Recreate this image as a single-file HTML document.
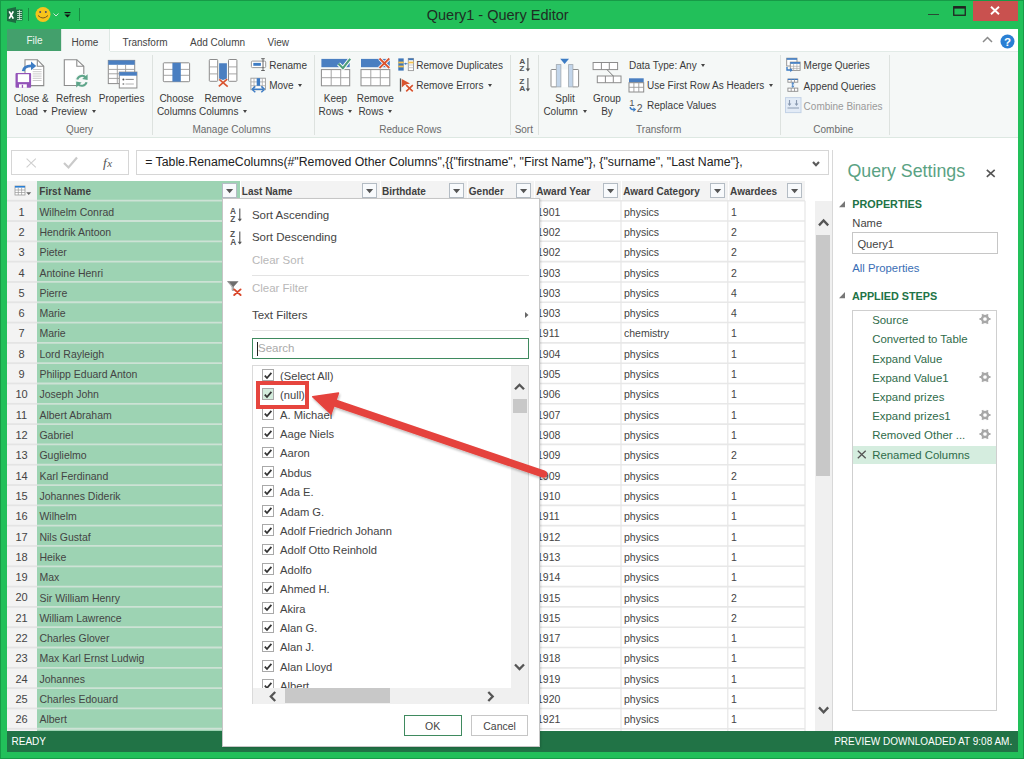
<!DOCTYPE html><html><head><meta charset="utf-8"><style>
html,body{margin:0;padding:0;}
body{width:1024px;height:759px;position:relative;overflow:hidden;background:#22c05a;font-family:"Liberation Sans", sans-serif;}
.t{position:absolute;white-space:pre;font-family:"Liberation Sans", sans-serif;}
.r{position:absolute;box-sizing:border-box;}
.dd{display:inline-block;width:0;height:0;border-left:2.5px solid transparent;border-right:2.5px solid transparent;border-top:3px solid #444;margin-left:2px;vertical-align:2px}
svg.r{overflow:visible}
</style></head><body>
<div class="r" style="left:0.00px;top:0.00px;width:1024.00px;height:1.00px;background:#179a47;"></div>
<div class="r" style="left:0.00px;top:0.00px;width:1.00px;height:759.00px;background:#179a47;"></div>
<div class="r" style="left:1023.00px;top:0.00px;width:1.00px;height:759.00px;background:#179a47;"></div>
<div class="r" style="left:0.00px;top:758.00px;width:1024.00px;height:1.00px;background:#179a47;"></div>
<svg class="r" style="left:7px;top:7px;" width="16" height="16" viewBox="0 0 16 16"><path d="M0 2 L9 0 L9 16 L0 14 Z" fill="#1d6b41"/><rect x="9" y="2.5" width="6.5" height="11" fill="#1d6b41"/><path d="M10 4.5h5M10 6.5h5M10 8.5h5M10 10.5h5M10 12.5h5M12.5 3v10" stroke="#cfe8d8" stroke-width="0.8"/><path d="M2.2 4.3 L6.3 11.7 M6.3 4.3 L2.2 11.7" stroke="#fff" stroke-width="1.7"/></svg>
<div class="r" style="left:28.00px;top:8.00px;width:1.00px;height:13.00px;background:#178c41;"></div>
<svg class="r" style="left:35px;top:7px;" width="16" height="16" viewBox="0 0 16 16"><circle cx="8" cy="7.5" r="7.5" fill="#f7c41b"/><circle cx="5.2" cy="5" r="1" fill="#4a4a6a"/><circle cx="10.8" cy="5" r="1" fill="#4a4a6a"/><path d="M3 8.5 Q8 13.5 13 8.5" stroke="#7a5a1a" stroke-width="1" fill="none"/></svg>
<svg class="r" style="left:53px;top:13px;" width="6" height="4" viewBox="0 0 6 4"><path d="M0.5 0.5 L3 3 L5.5 0.5" stroke="#cfe8d8" stroke-width="1" fill="none"/></svg>
<svg class="r" style="left:64px;top:12px;" width="7" height="6" viewBox="0 0 7 6"><rect x="0.5" y="0" width="6" height="1.2" fill="#111"/><path d="M0.5 2.5 L6.5 2.5 L3.5 5.5 Z" fill="#111"/></svg>
<div class="r" style="left:79.00px;top:8.00px;width:1.00px;height:13.00px;background:#178c41;"></div>
<div class="t" style="left:297.70px;width:400px;text-align:center;top:7.63px;font-size:14.5px;line-height:14.5px;color:#1f2d24;font-weight:400;">Query1 - Query Editor</div>
<div class="r" style="left:928.00px;top:14.00px;width:11.00px;height:1.30px;background:#2a4a35;"></div>
<svg class="r" style="left:953px;top:6px;" width="13" height="10" viewBox="0 0 13 10"><rect x="0.75" y="0.75" width="11.5" height="8.5" fill="none" stroke="#222" stroke-width="1.3"/><rect x="0.75" y="0.6" width="11.5" height="2" fill="#222"/></svg>
<div class="r" style="left:973.00px;top:1.00px;width:45.00px;height:20.00px;background:#c9514f;"></div>
<svg class="r" style="left:990px;top:6px;" width="10" height="9" viewBox="0 0 10 9"><path d="M1 0.8 L9 8.2 M9 0.8 L1 8.2" stroke="#fff" stroke-width="1.9"/></svg>
<div class="r" style="left:7.00px;top:29.00px;width:1010.50px;height:22.00px;background:#ffffff;"></div>
<div class="r" style="left:7.00px;top:29.00px;width:54.20px;height:22.00px;background:#43a06c;"></div>
<div class="t" style="left:26.50px;top:36.03px;font-size:10px;line-height:10px;color:#eef7f1;font-weight:400;">File</div>
<div class="r" style="left:61.20px;top:29.00px;width:48.50px;height:23.00px;background:#f5f8f7;border-left:1px solid #dde8e3;border-right:1px solid #dde8e3;"></div>
<div class="t" style="left:71.60px;top:37.53px;font-size:10px;line-height:10px;color:#444;font-weight:400;">Home</div>
<div class="t" style="left:122.40px;top:37.53px;font-size:10px;line-height:10px;color:#444;font-weight:400;">Transform</div>
<div class="t" style="left:190.00px;top:37.53px;font-size:10px;line-height:10px;color:#444;font-weight:400;">Add Column</div>
<div class="t" style="left:267.50px;top:37.53px;font-size:10px;line-height:10px;color:#444;font-weight:400;">View</div>
<svg class="r" style="left:982px;top:36px;" width="11" height="7" viewBox="0 0 11 7"><path d="M1 6 L5.5 1.5 L10 6" stroke="#8a8a8a" stroke-width="1.5" fill="none"/></svg>
<svg class="r" style="left:999.5px;top:33.5px;" width="15" height="15" viewBox="0 0 15 15"><circle cx="7.5" cy="7.5" r="7" fill="#2a7fd4"/><text x="7.5" y="11.6" font-family="Liberation Sans" font-weight="700" font-size="11.5" fill="#fff" text-anchor="middle">?</text></svg>
<div class="r" style="left:7.00px;top:51.00px;width:1010.50px;height:86.50px;background:#f5f8f7;"></div>
<div class="r" style="left:7.00px;top:136.80px;width:1010.50px;height:1.20px;background:#dde8e2;"></div>
<div class="r" style="left:109.50px;top:51.00px;width:908.00px;height:1.00px;background:#e2ebe7;"></div>
<div class="r" style="left:152.20px;top:55.00px;width:1.00px;height:80.00px;background:#dde2df;"></div>
<div class="r" style="left:313.60px;top:55.00px;width:1.00px;height:80.00px;background:#dde2df;"></div>
<div class="r" style="left:510.00px;top:55.00px;width:1.00px;height:80.00px;background:#dde2df;"></div>
<div class="r" style="left:538.40px;top:55.00px;width:1.00px;height:80.00px;background:#dde2df;"></div>
<div class="r" style="left:779.80px;top:55.00px;width:1.00px;height:80.00px;background:#dde2df;"></div>
<div class="r" style="left:889.30px;top:55.00px;width:1.00px;height:80.00px;background:#dde2df;"></div>
<svg class="r" style="left:14px;top:58px;" width="32" height="32" viewBox="0 0 32 32"><path d="M11 1.7 H23.3 L29.75 8.3 V27.6 H11 Z" fill="#fff" stroke="#8c8c8c" stroke-width="1.1"/><path d="M23.3 1.7 V8.3 H29.75" fill="none" stroke="#8c8c8c" stroke-width="1.1"/><path d="M18.7 11.5 H27.6" stroke="#c4c4c4" stroke-width="0.9"/><path d="M18.7 13.7 H27.6" stroke="#c4c4c4" stroke-width="0.9"/><path d="M18.7 15.9 H27.6" stroke="#c4c4c4" stroke-width="0.9"/><path d="M18.7 18.1 H27.6" stroke="#c4c4c4" stroke-width="0.9"/><path d="M18.7 20.3 H27.6" stroke="#c4c4c4" stroke-width="0.9"/><path d="M18.7 22.5 H27.6" stroke="#c4c4c4" stroke-width="0.9"/><path d="M9.3 13.2 Q9.8 7.6 18 7.9" fill="none" stroke="#3d7cc4" stroke-width="2.9"/><path d="M17 3.6 L22.2 8 L17 12.2 Z" fill="#3d7cc4"/><rect x="1.5" y="15" width="15.6" height="14.8" rx="1" fill="#9353b9"/><rect x="3.8" y="16.2" width="11.3" height="7.9" fill="#fff"/><rect x="5" y="26.3" width="7.8" height="3.5" fill="#fff"/><rect x="7.8" y="26.8" width="1.3" height="3" fill="#9353b9"/></svg>
<svg class="r" style="left:62px;top:58px;" width="30" height="30" viewBox="0 0 30 30"><path d="M2.3 1.7 H14.8 L21.8 8.3 V27.5 H2.3 Z" fill="#fff" stroke="#8c8c8c" stroke-width="1.1"/><path d="M14.8 1.7 V8.3 H21.8" fill="none" stroke="#8c8c8c" stroke-width="1.1"/><circle cx="19.9" cy="22.8" r="7" fill="#f5f8f7"/><path d="M15.2 21.5 A5 5 0 0 1 24 19.8" fill="none" stroke="#5ea58a" stroke-width="2.1"/><path d="M25.6 16.2 L25.6 22 L20.2 21 Z" fill="#5ea58a"/><path d="M24.6 24.2 A5 5 0 0 1 15.8 25.8" fill="none" stroke="#5ea58a" stroke-width="2.1"/><path d="M14.2 29.4 L14.2 23.6 L19.6 24.6 Z" fill="#5ea58a"/></svg>
<svg class="r" style="left:107px;top:59px;" width="32" height="31" viewBox="0 0 32 31"><rect x="1.3" y="1.4" width="26.4" height="23.2" fill="#fff" stroke="#8c8c8c" stroke-width="1"/><rect x="1.3" y="1.4" width="26.4" height="4.4" fill="#4a7fc1"/><path d="M10.3 5.8 V24.6 M18.6 5.8 V13 M1.3 10.4 H27.7 M1.3 14.8 H12 M1.3 19.4 H12" stroke="#9c9c9c" stroke-width="0.9"/><rect x="12.3" y="13.1" width="17.6" height="15.9" fill="#fff" stroke="#8c8c8c" stroke-width="1"/><rect x="12.3" y="13.1" width="17.6" height="3.6" fill="#4a7fc1"/><circle cx="16.4" cy="20.4" r="1" fill="#555"/><path d="M18.5 20.4 H26.8" stroke="#777" stroke-width="0.9"/><circle cx="16.4" cy="25" r="1" fill="#999"/><path d="M18.5 25 H26.8" stroke="#aaa" stroke-width="0.9"/></svg>
<svg class="r" style="left:162px;top:61px;" width="30" height="23" viewBox="0 0 30 23"><rect x="1.3" y="1.8" width="26.3" height="18.9" rx="0.8" fill="#fff" stroke="#8c8c8c" stroke-width="1"/><path d="M1.3 8.4 H27.6 M1.3 14.3 H27.6" stroke="#9c9c9c" stroke-width="0.9"/><rect x="10.4" y="1.8" width="8.4" height="18.9" fill="#4a7fc1"/></svg>
<svg class="r" style="left:208px;top:58px;" width="31" height="31" viewBox="0 0 31 31"><rect x="1.3" y="1.5" width="8.4" height="21.8" rx="0.8" fill="#fff" stroke="#8c8c8c" stroke-width="1"/><path d="M1.3 8.9 H9.7 M1.3 15.9 H9.7" stroke="#9c9c9c" stroke-width="0.9"/><rect x="20.5" y="1.5" width="8.4" height="21.8" rx="0.8" fill="#fff" stroke="#8c8c8c" stroke-width="1"/><path d="M20.5 8.9 H28.9 M20.5 15.9 H28.9" stroke="#9c9c9c" stroke-width="0.9"/><path d="M11.1 5.2 H18.9 V20.5 L15 22 L11.1 20.5 Z" fill="#4a7fc1"/><path d="M10.8 28.4 L19.2 21.1 M11.3 21.3 L19.7 28.6" stroke="#d9542f" stroke-width="1.6"/></svg>
<svg class="r" style="left:250px;top:58px;" width="17" height="14" viewBox="0 0 17 14"><rect x="1.4" y="3.1" width="14.3" height="6.5" rx="1" fill="#fff" stroke="#999" stroke-width="1"/><rect x="3.3" y="4.9" width="7.6" height="2.9" fill="#3d7cc4"/><path d="M13 0.7 V12.5 M11.2 0.7 H14.8 M11.2 12.5 H14.8" stroke="#555" stroke-width="0.9"/></svg>
<svg class="r" style="left:250px;top:77px;" width="17" height="16" viewBox="0 0 17 16"><rect x="0.9" y="1.2" width="14.5" height="11.5" fill="#fff" stroke="#999" stroke-width="0.9"/><path d="M4 1.2 V12.7 M12.3 1.2 V12.7 M0.9 4.9 H15.4 M0.9 8.7 H15.4" stroke="#aaa" stroke-width="0.8"/><rect x="6.7" y="1.2" width="3.4" height="7.6" fill="#3d7cc4"/><path d="M3 12.3 H13.6" stroke="#3d7cc4" stroke-width="1.6"/><path d="M2 12.3 L5.3 9.4 M2 12.3 L5.3 15.2 M14.6 12.3 L11.3 9.4 M14.6 12.3 L11.3 15.2" stroke="#3d7cc4" stroke-width="1.5"/></svg>
<svg class="r" style="left:320px;top:57px;" width="32" height="30" viewBox="0 0 32 30"><rect x="1.4" y="1.9" width="28.3" height="8.3" fill="#4a7fc1"/><rect x="1.4" y="12.6" width="28.3" height="16.2" fill="#fff" stroke="#8c8c8c" stroke-width="1"/><path d="M11.2 12.6 V28.8 M20.7 12.6 V28.8 M1.4 20.7 H29.7" stroke="#9c9c9c" stroke-width="0.9"/><path d="M18.5 6.8 L22.9 11.2 L30.2 1.9" fill="none" stroke="#fff" stroke-width="4"/><path d="M18.5 6.8 L22.9 11.2 L30.2 1.9" fill="none" stroke="#4e9e7a" stroke-width="2.1"/></svg>
<svg class="r" style="left:360px;top:57px;" width="32" height="30" viewBox="0 0 32 30"><rect x="1" y="1.9" width="28.8" height="8.3" fill="#4a7fc1"/><rect x="1" y="12.6" width="28.8" height="16.2" fill="#fff" stroke="#8c8c8c" stroke-width="1"/><path d="M10.8 12.6 V28.8 M20.3 12.6 V28.8 M1 20.7 H29.8" stroke="#9c9c9c" stroke-width="0.9"/><path d="M19.5 1.5 L29.3 11 M29.3 1.5 L19.5 11" stroke="#fff" stroke-width="3.5"/><path d="M19.5 1.5 L29.3 11 M29.3 1.5 L19.5 11" stroke="#d9542f" stroke-width="1.8"/></svg>
<svg class="r" style="left:397px;top:57px;" width="18" height="15" viewBox="0 0 18 15"><rect x="1.3" y="1.4" width="5.4" height="12.2" fill="#3f77b9"/><rect x="1.3" y="4.6" width="5.4" height="1.8" fill="#f2c14e"/><rect x="1.3" y="8.6" width="5.4" height="1.8" fill="#f2c14e"/><rect x="11.3" y="1.4" width="5.2" height="12.2" fill="#fff" stroke="#999" stroke-width="0.9"/><rect x="11.3" y="1.4" width="5.2" height="1.8" fill="#3f77b9"/><rect x="11.3" y="4.6" width="5.2" height="1.8" fill="#f2c14e"/><path d="M11.3 8 H16.5 M11.3 10.7 H16.5" stroke="#bbb" stroke-width="0.8"/><path d="M7.5 6.7 H10.5" stroke="#3f77b9" stroke-width="0.9"/><path d="M7.3 6.7 L8.8 5.5 V7.9 Z" fill="#3f77b9"/></svg>
<svg class="r" style="left:398px;top:77px;" width="17" height="16" viewBox="0 0 17 16"><path d="M2.5 1.4 V14.6" stroke="#555" stroke-width="1.3"/><path d="M3.8 2 L12 6.5 L6.5 8 L3.8 10.5 Z" fill="#d9542f"/><path d="M8.2 8.2 L14.8 14.4 M14.8 8.2 L8.2 14.4" stroke="#fff" stroke-width="3"/><path d="M8.2 8.2 L14.8 14.4 M14.8 8.2 L8.2 14.4" stroke="#d9542f" stroke-width="1.7"/></svg>
<svg class="r" style="left:518px;top:57px;" width="14" height="16" viewBox="0 0 14 16"><text x="1.2" y="7.9" font-family="Liberation Sans" font-size="8.4" font-weight="700" fill="#555" transform="scale(1,0.86)">A</text><text x="1.2" y="16.5" font-family="Liberation Sans" font-size="8.4" font-weight="700" fill="#555" transform="scale(1,0.86)">Z</text><path d="M9.9 1 V13" stroke="#555" stroke-width="1.1"/><path d="M7.7 11.4 H12.1 L9.9 14.4 Z" fill="#555"/></svg>
<svg class="r" style="left:518px;top:77px;" width="14" height="16" viewBox="0 0 14 16"><text x="1.2" y="7.9" font-family="Liberation Sans" font-size="8.4" font-weight="700" fill="#555" transform="scale(1,0.86)">Z</text><text x="1.2" y="16.5" font-family="Liberation Sans" font-size="8.4" font-weight="700" fill="#555" transform="scale(1,0.86)">A</text><path d="M9.9 1 V13" stroke="#555" stroke-width="1.1"/><path d="M7.7 11.4 H12.1 L9.9 14.4 Z" fill="#555"/></svg>
<svg class="r" style="left:548px;top:56px;" width="34" height="34" viewBox="0 0 34 34"><rect x="8.3" y="13.5" width="12.3" height="17.4" fill="#fff"/><path d="M8.3 13.5 H3.7 Q3 13.5 3 14.2 V30.2 Q3 30.9 3.7 30.9 H8.3" fill="#fff" stroke="#8c8c8c" stroke-width="1"/><path d="M24.9 13.5 H29.9 Q30.6 13.5 30.6 14.2 V30.2 Q30.6 30.9 29.9 30.9 H24.9" fill="#fff" stroke="#8c8c8c" stroke-width="1"/><rect x="8.3" y="8.6" width="4.6" height="22.3" fill="#c2d5ea" stroke="#a0a8b0" stroke-width="0.8"/><rect x="20.6" y="8.6" width="4.3" height="22.3" fill="#c2d5ea" stroke="#a0a8b0" stroke-width="0.8"/><path d="M12.2 2.8 H21 L16.6 7.9 Z" fill="#3d7cc4"/></svg>
<svg class="r" style="left:592px;top:61px;" width="31" height="23" viewBox="0 0 31 23"><rect x="1.1" y="1.5" width="24.5" height="7.1" fill="#fff" stroke="#8c8c8c" stroke-width="1"/><path d="M9.4 1.5 V8.6 M17.3 1.5 V8.6" stroke="#8c8c8c" stroke-width="1"/><rect x="5.3" y="15" width="23.7" height="6.7" fill="#fff" stroke="#8c8c8c" stroke-width="1"/><path d="M13.4 15 V21.7 M21.3 15 V21.7" stroke="#8c8c8c" stroke-width="1"/><path d="M15 8.6 L21.3 15" stroke="#777" stroke-width="1"/></svg>
<svg class="r" style="left:628px;top:77px;" width="17" height="16" viewBox="0 0 17 16"><rect x="1" y="1.3" width="14.7" height="4.4" fill="#4a7fc1"/><rect x="1" y="5.7" width="14.7" height="9.3" fill="#fff" stroke="#8c8c8c" stroke-width="1"/><path d="M5.9 5.7 V15 M10.8 5.7 V15 M1 10.3 H15.7" stroke="#9c9c9c" stroke-width="0.9"/></svg>
<svg class="r" style="left:628px;top:97px;" width="17" height="17" viewBox="0 0 17 17"><text x="1.2" y="8.8" font-family="Liberation Sans" font-size="9.6" fill="#555">1</text><text x="8.8" y="14.9" font-family="Liberation Sans" font-size="10.5" fill="#555">2</text><path d="M2.2 10 Q2.2 12.6 6 12.6" fill="none" stroke="#3d7cc4" stroke-width="1.5"/><path d="M5.4 10.2 L8.2 12.6 L5.4 15 Z" fill="#3d7cc4"/></svg>
<svg class="r" style="left:785px;top:57px;" width="17" height="17" viewBox="0 0 17 17"><rect x="1.7" y="1.2" width="10.3" height="7.8" fill="#fff" stroke="#8c8c8c" stroke-width="0.9"/><rect x="1.7" y="1.2" width="10.3" height="1.6" fill="#3d7cc4"/><rect x="5.3" y="5.1" width="9.8" height="8.3" fill="#fff" stroke="#8c8c8c" stroke-width="0.9"/><rect x="5.3" y="5.1" width="9.8" height="1.7" fill="#3d7cc4"/><path d="M5.3 9.3 H15.1 M5.3 11.4 H15.1 M8.6 6.8 V13.4 M11.9 6.8 V13.4" stroke="#aaa" stroke-width="0.7"/><path d="M2 10 V13 H6" fill="none" stroke="#3d7cc4" stroke-width="1.4"/><path d="M5.3 10.8 L7.6 13 L5.3 15.2 Z" fill="#3d7cc4"/></svg>
<svg class="r" style="left:786px;top:77px;" width="14" height="16" viewBox="0 0 14 16"><rect x="1.9" y="2.1" width="9.9" height="3.1" fill="#fff" stroke="#8c8c8c" stroke-width="0.9"/><rect x="1.9" y="1.8" width="9.9" height="1.2" fill="#3d7cc4"/><path d="M5.2 2.1 V5.2 M8.5 2.1 V5.2" stroke="#8c8c8c" stroke-width="0.8"/><path d="M6.8 6 V10" stroke="#3d7cc4" stroke-width="1.1"/><path d="M5.5 6.8 L6.8 5.6 L8.1 6.8 M5.5 9.2 L6.8 10.4 L8.1 9.2" fill="none" stroke="#3d7cc4" stroke-width="0.9"/><rect x="1.9" y="11.1" width="9.9" height="3.2" fill="#fff" stroke="#8c8c8c" stroke-width="0.9"/><path d="M5.2 11.1 V14.3 M8.5 11.1 V14.3" stroke="#8c8c8c" stroke-width="0.8"/></svg>
<svg class="r" style="left:785px;top:97px;" width="17" height="17" viewBox="0 0 17 17"><rect x="0.5" y="0.6" width="15.5" height="15" fill="#e2ebf6" stroke="#c3d2e6" stroke-width="1"/><path d="M4.5 3 V8 M11.5 3 V8" stroke="#8a9ab0" stroke-width="1.1"/><path d="M2.6 6.5 H6.4 L4.5 9 Z M9.6 6.5 H13.4 L11.5 9 Z" fill="#8a9ab0"/><path d="M2.5 11 H14" stroke="#8a9ab0" stroke-width="1"/></svg>
<div class="t" style="left:-120.50px;width:400px;text-align:center;top:125.23px;font-size:10px;line-height:10px;color:#6b6b6b;font-weight:400;">Query</div>
<div class="t" style="left:31.60px;width:400px;text-align:center;top:125.23px;font-size:10px;line-height:10px;color:#6b6b6b;font-weight:400;">Manage Columns</div>
<div class="t" style="left:210.40px;width:400px;text-align:center;top:125.23px;font-size:10px;line-height:10px;color:#6b6b6b;font-weight:400;">Reduce Rows</div>
<div class="t" style="left:323.80px;width:400px;text-align:center;top:125.23px;font-size:10px;line-height:10px;color:#6b6b6b;font-weight:400;">Sort</div>
<div class="t" style="left:458.70px;width:400px;text-align:center;top:125.23px;font-size:10px;line-height:10px;color:#6b6b6b;font-weight:400;">Transform</div>
<div class="t" style="left:633.30px;width:400px;text-align:center;top:125.23px;font-size:10px;line-height:10px;color:#6b6b6b;font-weight:400;">Combine</div>
<div class="t" style="left:-168.80px;width:400px;text-align:center;top:94.03px;font-size:10px;line-height:10px;color:#3a3a3a;font-weight:400;">Close &amp;</div>
<div class="t" style="left:-168.80px;width:400px;text-align:center;top:106.83px;font-size:10px;line-height:10px;color:#3a3a3a;font-weight:400;">Load <span class="dd"></span></div>
<div class="t" style="left:-126.50px;width:400px;text-align:center;top:94.03px;font-size:10px;line-height:10px;color:#3a3a3a;font-weight:400;">Refresh</div>
<div class="t" style="left:-126.50px;width:400px;text-align:center;top:106.83px;font-size:10px;line-height:10px;color:#3a3a3a;font-weight:400;">Preview <span class="dd"></span></div>
<div class="t" style="left:-78.40px;width:400px;text-align:center;top:94.03px;font-size:10px;line-height:10px;color:#3a3a3a;font-weight:400;">Properties</div>
<div class="t" style="left:-23.40px;width:400px;text-align:center;top:94.03px;font-size:10px;line-height:10px;color:#3a3a3a;font-weight:400;">Choose</div>
<div class="t" style="left:-23.40px;width:400px;text-align:center;top:106.83px;font-size:10px;line-height:10px;color:#3a3a3a;font-weight:400;">Columns</div>
<div class="t" style="left:23.10px;width:400px;text-align:center;top:94.03px;font-size:10px;line-height:10px;color:#3a3a3a;font-weight:400;">Remove</div>
<div class="t" style="left:23.10px;width:400px;text-align:center;top:106.83px;font-size:10px;line-height:10px;color:#3a3a3a;font-weight:400;">Columns <span class="dd"></span></div>
<div class="t" style="left:135.50px;width:400px;text-align:center;top:94.03px;font-size:10px;line-height:10px;color:#3a3a3a;font-weight:400;">Keep</div>
<div class="t" style="left:135.50px;width:400px;text-align:center;top:106.83px;font-size:10px;line-height:10px;color:#3a3a3a;font-weight:400;">Rows <span class="dd"></span></div>
<div class="t" style="left:175.30px;width:400px;text-align:center;top:94.03px;font-size:10px;line-height:10px;color:#3a3a3a;font-weight:400;">Remove</div>
<div class="t" style="left:175.30px;width:400px;text-align:center;top:106.83px;font-size:10px;line-height:10px;color:#3a3a3a;font-weight:400;">Rows <span class="dd"></span></div>
<div class="t" style="left:365.00px;width:400px;text-align:center;top:94.03px;font-size:10px;line-height:10px;color:#3a3a3a;font-weight:400;">Split</div>
<div class="t" style="left:365.00px;width:400px;text-align:center;top:106.83px;font-size:10px;line-height:10px;color:#3a3a3a;font-weight:400;">Column <span class="dd"></span></div>
<div class="t" style="left:407.00px;width:400px;text-align:center;top:94.03px;font-size:10px;line-height:10px;color:#3a3a3a;font-weight:400;">Group</div>
<div class="t" style="left:407.00px;width:400px;text-align:center;top:106.83px;font-size:10px;line-height:10px;color:#3a3a3a;font-weight:400;">By</div>
<div class="t" style="left:269.20px;top:61.03px;font-size:10px;line-height:10px;color:#3a3a3a;font-weight:400;">Rename</div>
<div class="t" style="left:269.20px;top:81.03px;font-size:10px;line-height:10px;color:#3a3a3a;font-weight:400;">Move <span class="dd"></span></div>
<div class="t" style="left:416.20px;top:61.03px;font-size:10px;line-height:10px;color:#3a3a3a;font-weight:400;">Remove Duplicates</div>
<div class="t" style="left:416.20px;top:81.03px;font-size:10px;line-height:10px;color:#3a3a3a;font-weight:400;">Remove Errors <span class="dd"></span></div>
<div class="t" style="left:629.00px;top:60.94px;font-size:10px;line-height:10px;color:#3a3a3a;font-weight:400;">Data Type: Any <span class="dd"></span></div>
<div class="t" style="left:647.00px;top:81.23px;font-size:10px;line-height:10px;color:#3a3a3a;font-weight:400;">Use First Row As Headers <span class="dd"></span></div>
<div class="t" style="left:647.00px;top:101.33px;font-size:10px;line-height:10px;color:#3a3a3a;font-weight:400;">Replace Values</div>
<div class="t" style="left:803.60px;top:61.33px;font-size:10px;line-height:10px;color:#3a3a3a;font-weight:400;">Merge Queries</div>
<div class="t" style="left:803.60px;top:81.53px;font-size:10px;line-height:10px;color:#3a3a3a;font-weight:400;">Append Queries</div>
<div class="t" style="left:803.60px;top:101.53px;font-size:10px;line-height:10px;color:#9a9a9a;font-weight:400;">Combine Binaries</div>
<div class="r" style="left:7.00px;top:138.00px;width:1010.50px;height:593.00px;background:#ffffff;"></div>
<div class="r" style="left:11.00px;top:150.00px;width:117.50px;height:24.80px;background:#fff;border:1px solid #d6d6d6;"></div>
<svg class="r" style="left:26px;top:157.5px;" width="11" height="10" viewBox="0 0 11 10"><path d="M0.6 0.6 L9.8 9.4 M9.8 0.6 L0.6 9.4" stroke="#cfcfcf" stroke-width="1.1"/></svg>
<svg class="r" style="left:63px;top:156px;" width="15" height="13" viewBox="0 0 15 13"><path d="M1 7 L5.5 11.5 L14 1.5" stroke="#cacaca" stroke-width="2.2" fill="none"/></svg>
<svg class="r" style="left:102px;top:155px;" width="14" height="14" viewBox="0 0 14 14"><text x="1" y="11.5" font-family="Liberation Serif" font-style="italic" font-size="13.5" fill="#555">f</text><text x="5.2" y="11.5" font-family="Liberation Serif" font-style="italic" font-size="11" fill="#555">x</text></svg>
<div class="r" style="left:135.50px;top:150.00px;width:693.00px;height:24.80px;background:#fff;border:1px solid #d6d6d6;"></div>
<div class="t" style="left:145.20px;top:156.09px;font-size:12.3px;line-height:12.3px;color:#222;font-weight:400;">= Table.RenameColumns(#"Removed Other Columns",{{"firstname", "First Name"}, {"surname", "Last Name"},</div>
<svg class="r" style="left:811.5px;top:160.8px;" width="8" height="6" viewBox="0 0 8 6"><path d="M1 1 L4 4.3 L7 1" stroke="#5a5a5a" stroke-width="2.1" fill="none"/></svg>
<div class="r" style="left:7.00px;top:180.80px;width:798.00px;height:20.00px;background:#f3f3f3;"></div>
<div class="r" style="left:37.00px;top:180.80px;width:202.50px;height:20.00px;background:#9dd3b3;"></div>
<div class="r" style="left:239.50px;top:180.80px;width:1.00px;height:20.00px;background:#ffffff;"></div>
<div class="r" style="left:379.70px;top:180.80px;width:1.00px;height:20.00px;background:#ffffff;"></div>
<div class="r" style="left:466.50px;top:180.80px;width:1.00px;height:20.00px;background:#ffffff;"></div>
<div class="r" style="left:534.00px;top:180.80px;width:1.00px;height:20.00px;background:#ffffff;"></div>
<div class="r" style="left:621.00px;top:180.80px;width:1.00px;height:20.00px;background:#ffffff;"></div>
<div class="r" style="left:727.80px;top:180.80px;width:1.00px;height:20.00px;background:#ffffff;"></div>
<div class="r" style="left:805.00px;top:180.80px;width:1.00px;height:20.00px;background:#ffffff;"></div>
<div class="t" style="left:39.30px;top:186.84px;font-size:10px;line-height:10px;color:#404040;font-weight:700;">First Name</div>
<div class="r" style="left:221.50px;top:183.10px;width:15.30px;height:14.90px;background:#f8fafc;border:1px solid #b4bcc4;"></div>
<svg class="r" style="left:225.6px;top:188.6px;" width="7.4" height="4.5" viewBox="0 0 7.4 4.5"><path d="M0 0 L7.2 0 L3.6 4.2 Z" fill="#555"/></svg>
<div class="t" style="left:241.80px;top:186.84px;font-size:10px;line-height:10px;color:#404040;font-weight:700;">Last Name</div>
<div class="r" style="left:361.70px;top:183.10px;width:15.30px;height:14.90px;background:#f8fafc;border:1px solid #b4bcc4;"></div>
<svg class="r" style="left:365.8px;top:188.6px;" width="7.4" height="4.5" viewBox="0 0 7.4 4.5"><path d="M0 0 L7.2 0 L3.6 4.2 Z" fill="#555"/></svg>
<div class="t" style="left:382.00px;top:186.84px;font-size:10px;line-height:10px;color:#404040;font-weight:700;">Birthdate</div>
<div class="r" style="left:448.50px;top:183.10px;width:15.30px;height:14.90px;background:#f8fafc;border:1px solid #b4bcc4;"></div>
<svg class="r" style="left:452.6px;top:188.6px;" width="7.4" height="4.5" viewBox="0 0 7.4 4.5"><path d="M0 0 L7.2 0 L3.6 4.2 Z" fill="#555"/></svg>
<div class="t" style="left:468.80px;top:186.84px;font-size:10px;line-height:10px;color:#404040;font-weight:700;">Gender</div>
<div class="r" style="left:516.00px;top:183.10px;width:15.30px;height:14.90px;background:#f8fafc;border:1px solid #b4bcc4;"></div>
<svg class="r" style="left:520.1px;top:188.6px;" width="7.4" height="4.5" viewBox="0 0 7.4 4.5"><path d="M0 0 L7.2 0 L3.6 4.2 Z" fill="#555"/></svg>
<div class="t" style="left:536.30px;top:186.84px;font-size:10px;line-height:10px;color:#404040;font-weight:700;">Award Year</div>
<div class="r" style="left:603.00px;top:183.10px;width:15.30px;height:14.90px;background:#f8fafc;border:1px solid #b4bcc4;"></div>
<svg class="r" style="left:607.1px;top:188.6px;" width="7.4" height="4.5" viewBox="0 0 7.4 4.5"><path d="M0 0 L7.2 0 L3.6 4.2 Z" fill="#555"/></svg>
<div class="t" style="left:623.30px;top:186.84px;font-size:10px;line-height:10px;color:#404040;font-weight:700;">Award Category</div>
<div class="r" style="left:709.80px;top:183.10px;width:15.30px;height:14.90px;background:#f8fafc;border:1px solid #b4bcc4;"></div>
<svg class="r" style="left:713.9px;top:188.6px;" width="7.4" height="4.5" viewBox="0 0 7.4 4.5"><path d="M0 0 L7.2 0 L3.6 4.2 Z" fill="#555"/></svg>
<div class="t" style="left:730.10px;top:186.84px;font-size:10px;line-height:10px;color:#404040;font-weight:700;">Awardees</div>
<div class="r" style="left:787.00px;top:183.10px;width:15.30px;height:14.90px;background:#f8fafc;border:1px solid #b4bcc4;"></div>
<svg class="r" style="left:791.1px;top:188.6px;" width="7.4" height="4.5" viewBox="0 0 7.4 4.5"><path d="M0 0 L7.2 0 L3.6 4.2 Z" fill="#555"/></svg>
<svg class="r" style="left:14.5px;top:186px;" width="16" height="10" viewBox="0 0 16 10"><rect x="0" y="0" width="10" height="9" fill="#fff" stroke="#9a9a9a" stroke-width="0.8"/><rect x="0" y="0" width="10" height="1.6" fill="#2a7fd4"/><path d="M0 4h10M0 6.5h10M3.3 1.6v7.4M6.6 1.6v7.4" stroke="#9a9a9a" stroke-width="0.7"/><path d="M11.2 6.2 L16.2 6.2 L13.7 8.9 Z" fill="#666"/></svg>
<div class="r" style="left:7.00px;top:200.70px;width:30.00px;height:530.40px;background:#f3f3f3;"></div>
<div class="r" style="left:37.00px;top:200.70px;width:202.50px;height:530.40px;background:#9dd3b3;"></div>
<div class="t" style="left:-178.50px;width:400px;text-align:center;top:206.59px;font-size:11px;line-height:11px;color:#444;font-weight:400;">1</div>
<div class="t" style="left:39.40px;top:206.61px;font-size:10.5px;line-height:10.5px;color:#444;font-weight:400;">Wilhelm Conrad</div>
<div class="t" style="left:537.00px;top:206.61px;font-size:10.5px;line-height:10.5px;color:#444;font-weight:400;">1901</div>
<div class="t" style="left:624.00px;top:206.61px;font-size:10.5px;line-height:10.5px;color:#444;font-weight:400;">physics</div>
<div class="t" style="left:731.00px;top:206.61px;font-size:10.5px;line-height:10.5px;color:#444;font-weight:400;">1</div>
<div class="t" style="left:-178.50px;width:400px;text-align:center;top:226.90px;font-size:11px;line-height:11px;color:#444;font-weight:400;">2</div>
<div class="t" style="left:39.40px;top:226.92px;font-size:10.5px;line-height:10.5px;color:#444;font-weight:400;">Hendrik Antoon</div>
<div class="t" style="left:537.00px;top:226.92px;font-size:10.5px;line-height:10.5px;color:#444;font-weight:400;">1902</div>
<div class="t" style="left:624.00px;top:226.92px;font-size:10.5px;line-height:10.5px;color:#444;font-weight:400;">physics</div>
<div class="t" style="left:731.00px;top:226.92px;font-size:10.5px;line-height:10.5px;color:#444;font-weight:400;">2</div>
<div class="t" style="left:-178.50px;width:400px;text-align:center;top:247.21px;font-size:11px;line-height:11px;color:#444;font-weight:400;">3</div>
<div class="t" style="left:39.40px;top:247.23px;font-size:10.5px;line-height:10.5px;color:#444;font-weight:400;">Pieter</div>
<div class="t" style="left:537.00px;top:247.23px;font-size:10.5px;line-height:10.5px;color:#444;font-weight:400;">1902</div>
<div class="t" style="left:624.00px;top:247.23px;font-size:10.5px;line-height:10.5px;color:#444;font-weight:400;">physics</div>
<div class="t" style="left:731.00px;top:247.23px;font-size:10.5px;line-height:10.5px;color:#444;font-weight:400;">2</div>
<div class="t" style="left:-178.50px;width:400px;text-align:center;top:267.52px;font-size:11px;line-height:11px;color:#444;font-weight:400;">4</div>
<div class="t" style="left:39.40px;top:267.54px;font-size:10.5px;line-height:10.5px;color:#444;font-weight:400;">Antoine Henri</div>
<div class="t" style="left:537.00px;top:267.54px;font-size:10.5px;line-height:10.5px;color:#444;font-weight:400;">1903</div>
<div class="t" style="left:624.00px;top:267.54px;font-size:10.5px;line-height:10.5px;color:#444;font-weight:400;">physics</div>
<div class="t" style="left:731.00px;top:267.54px;font-size:10.5px;line-height:10.5px;color:#444;font-weight:400;">2</div>
<div class="t" style="left:-178.50px;width:400px;text-align:center;top:287.83px;font-size:11px;line-height:11px;color:#444;font-weight:400;">5</div>
<div class="t" style="left:39.40px;top:287.85px;font-size:10.5px;line-height:10.5px;color:#444;font-weight:400;">Pierre</div>
<div class="t" style="left:537.00px;top:287.85px;font-size:10.5px;line-height:10.5px;color:#444;font-weight:400;">1903</div>
<div class="t" style="left:624.00px;top:287.85px;font-size:10.5px;line-height:10.5px;color:#444;font-weight:400;">physics</div>
<div class="t" style="left:731.00px;top:287.85px;font-size:10.5px;line-height:10.5px;color:#444;font-weight:400;">4</div>
<div class="t" style="left:-178.50px;width:400px;text-align:center;top:308.14px;font-size:11px;line-height:11px;color:#444;font-weight:400;">6</div>
<div class="t" style="left:39.40px;top:308.16px;font-size:10.5px;line-height:10.5px;color:#444;font-weight:400;">Marie</div>
<div class="t" style="left:537.00px;top:308.16px;font-size:10.5px;line-height:10.5px;color:#444;font-weight:400;">1903</div>
<div class="t" style="left:624.00px;top:308.16px;font-size:10.5px;line-height:10.5px;color:#444;font-weight:400;">physics</div>
<div class="t" style="left:731.00px;top:308.16px;font-size:10.5px;line-height:10.5px;color:#444;font-weight:400;">4</div>
<div class="t" style="left:-178.50px;width:400px;text-align:center;top:328.45px;font-size:11px;line-height:11px;color:#444;font-weight:400;">7</div>
<div class="t" style="left:39.40px;top:328.47px;font-size:10.5px;line-height:10.5px;color:#444;font-weight:400;">Marie</div>
<div class="t" style="left:537.00px;top:328.47px;font-size:10.5px;line-height:10.5px;color:#444;font-weight:400;">1911</div>
<div class="t" style="left:624.00px;top:328.47px;font-size:10.5px;line-height:10.5px;color:#444;font-weight:400;">chemistry</div>
<div class="t" style="left:731.00px;top:328.47px;font-size:10.5px;line-height:10.5px;color:#444;font-weight:400;">1</div>
<div class="t" style="left:-178.50px;width:400px;text-align:center;top:348.76px;font-size:11px;line-height:11px;color:#444;font-weight:400;">8</div>
<div class="t" style="left:39.40px;top:348.78px;font-size:10.5px;line-height:10.5px;color:#444;font-weight:400;">Lord Rayleigh</div>
<div class="t" style="left:537.00px;top:348.78px;font-size:10.5px;line-height:10.5px;color:#444;font-weight:400;">1904</div>
<div class="t" style="left:624.00px;top:348.78px;font-size:10.5px;line-height:10.5px;color:#444;font-weight:400;">physics</div>
<div class="t" style="left:731.00px;top:348.78px;font-size:10.5px;line-height:10.5px;color:#444;font-weight:400;">1</div>
<div class="t" style="left:-178.50px;width:400px;text-align:center;top:369.07px;font-size:11px;line-height:11px;color:#444;font-weight:400;">9</div>
<div class="t" style="left:39.40px;top:369.09px;font-size:10.5px;line-height:10.5px;color:#444;font-weight:400;">Philipp Eduard Anton</div>
<div class="t" style="left:537.00px;top:369.09px;font-size:10.5px;line-height:10.5px;color:#444;font-weight:400;">1905</div>
<div class="t" style="left:624.00px;top:369.09px;font-size:10.5px;line-height:10.5px;color:#444;font-weight:400;">physics</div>
<div class="t" style="left:731.00px;top:369.09px;font-size:10.5px;line-height:10.5px;color:#444;font-weight:400;">1</div>
<div class="t" style="left:-178.50px;width:400px;text-align:center;top:389.38px;font-size:11px;line-height:11px;color:#444;font-weight:400;">10</div>
<div class="t" style="left:39.40px;top:389.40px;font-size:10.5px;line-height:10.5px;color:#444;font-weight:400;">Joseph John</div>
<div class="t" style="left:537.00px;top:389.40px;font-size:10.5px;line-height:10.5px;color:#444;font-weight:400;">1906</div>
<div class="t" style="left:624.00px;top:389.40px;font-size:10.5px;line-height:10.5px;color:#444;font-weight:400;">physics</div>
<div class="t" style="left:731.00px;top:389.40px;font-size:10.5px;line-height:10.5px;color:#444;font-weight:400;">1</div>
<div class="t" style="left:-178.50px;width:400px;text-align:center;top:409.69px;font-size:11px;line-height:11px;color:#444;font-weight:400;">11</div>
<div class="t" style="left:39.40px;top:409.71px;font-size:10.5px;line-height:10.5px;color:#444;font-weight:400;">Albert Abraham</div>
<div class="t" style="left:537.00px;top:409.71px;font-size:10.5px;line-height:10.5px;color:#444;font-weight:400;">1907</div>
<div class="t" style="left:624.00px;top:409.71px;font-size:10.5px;line-height:10.5px;color:#444;font-weight:400;">physics</div>
<div class="t" style="left:731.00px;top:409.71px;font-size:10.5px;line-height:10.5px;color:#444;font-weight:400;">1</div>
<div class="t" style="left:-178.50px;width:400px;text-align:center;top:430.00px;font-size:11px;line-height:11px;color:#444;font-weight:400;">12</div>
<div class="t" style="left:39.40px;top:430.02px;font-size:10.5px;line-height:10.5px;color:#444;font-weight:400;">Gabriel</div>
<div class="t" style="left:537.00px;top:430.02px;font-size:10.5px;line-height:10.5px;color:#444;font-weight:400;">1908</div>
<div class="t" style="left:624.00px;top:430.02px;font-size:10.5px;line-height:10.5px;color:#444;font-weight:400;">physics</div>
<div class="t" style="left:731.00px;top:430.02px;font-size:10.5px;line-height:10.5px;color:#444;font-weight:400;">1</div>
<div class="t" style="left:-178.50px;width:400px;text-align:center;top:450.31px;font-size:11px;line-height:11px;color:#444;font-weight:400;">13</div>
<div class="t" style="left:39.40px;top:450.33px;font-size:10.5px;line-height:10.5px;color:#444;font-weight:400;">Guglielmo</div>
<div class="t" style="left:537.00px;top:450.33px;font-size:10.5px;line-height:10.5px;color:#444;font-weight:400;">1909</div>
<div class="t" style="left:624.00px;top:450.33px;font-size:10.5px;line-height:10.5px;color:#444;font-weight:400;">physics</div>
<div class="t" style="left:731.00px;top:450.33px;font-size:10.5px;line-height:10.5px;color:#444;font-weight:400;">2</div>
<div class="t" style="left:-178.50px;width:400px;text-align:center;top:470.62px;font-size:11px;line-height:11px;color:#444;font-weight:400;">14</div>
<div class="t" style="left:39.40px;top:470.64px;font-size:10.5px;line-height:10.5px;color:#444;font-weight:400;">Karl Ferdinand</div>
<div class="t" style="left:537.00px;top:470.64px;font-size:10.5px;line-height:10.5px;color:#444;font-weight:400;">1909</div>
<div class="t" style="left:624.00px;top:470.64px;font-size:10.5px;line-height:10.5px;color:#444;font-weight:400;">physics</div>
<div class="t" style="left:731.00px;top:470.64px;font-size:10.5px;line-height:10.5px;color:#444;font-weight:400;">2</div>
<div class="t" style="left:-178.50px;width:400px;text-align:center;top:490.93px;font-size:11px;line-height:11px;color:#444;font-weight:400;">15</div>
<div class="t" style="left:39.40px;top:490.95px;font-size:10.5px;line-height:10.5px;color:#444;font-weight:400;">Johannes Diderik</div>
<div class="t" style="left:537.00px;top:490.95px;font-size:10.5px;line-height:10.5px;color:#444;font-weight:400;">1910</div>
<div class="t" style="left:624.00px;top:490.95px;font-size:10.5px;line-height:10.5px;color:#444;font-weight:400;">physics</div>
<div class="t" style="left:731.00px;top:490.95px;font-size:10.5px;line-height:10.5px;color:#444;font-weight:400;">1</div>
<div class="t" style="left:-178.50px;width:400px;text-align:center;top:511.24px;font-size:11px;line-height:11px;color:#444;font-weight:400;">16</div>
<div class="t" style="left:39.40px;top:511.26px;font-size:10.5px;line-height:10.5px;color:#444;font-weight:400;">Wilhelm</div>
<div class="t" style="left:537.00px;top:511.26px;font-size:10.5px;line-height:10.5px;color:#444;font-weight:400;">1911</div>
<div class="t" style="left:624.00px;top:511.26px;font-size:10.5px;line-height:10.5px;color:#444;font-weight:400;">physics</div>
<div class="t" style="left:731.00px;top:511.26px;font-size:10.5px;line-height:10.5px;color:#444;font-weight:400;">1</div>
<div class="t" style="left:-178.50px;width:400px;text-align:center;top:531.55px;font-size:11px;line-height:11px;color:#444;font-weight:400;">17</div>
<div class="t" style="left:39.40px;top:531.57px;font-size:10.5px;line-height:10.5px;color:#444;font-weight:400;">Nils Gustaf</div>
<div class="t" style="left:537.00px;top:531.57px;font-size:10.5px;line-height:10.5px;color:#444;font-weight:400;">1912</div>
<div class="t" style="left:624.00px;top:531.57px;font-size:10.5px;line-height:10.5px;color:#444;font-weight:400;">physics</div>
<div class="t" style="left:731.00px;top:531.57px;font-size:10.5px;line-height:10.5px;color:#444;font-weight:400;">1</div>
<div class="t" style="left:-178.50px;width:400px;text-align:center;top:551.86px;font-size:11px;line-height:11px;color:#444;font-weight:400;">18</div>
<div class="t" style="left:39.40px;top:551.88px;font-size:10.5px;line-height:10.5px;color:#444;font-weight:400;">Heike</div>
<div class="t" style="left:537.00px;top:551.88px;font-size:10.5px;line-height:10.5px;color:#444;font-weight:400;">1913</div>
<div class="t" style="left:624.00px;top:551.88px;font-size:10.5px;line-height:10.5px;color:#444;font-weight:400;">physics</div>
<div class="t" style="left:731.00px;top:551.88px;font-size:10.5px;line-height:10.5px;color:#444;font-weight:400;">1</div>
<div class="t" style="left:-178.50px;width:400px;text-align:center;top:572.17px;font-size:11px;line-height:11px;color:#444;font-weight:400;">19</div>
<div class="t" style="left:39.40px;top:572.19px;font-size:10.5px;line-height:10.5px;color:#444;font-weight:400;">Max</div>
<div class="t" style="left:537.00px;top:572.19px;font-size:10.5px;line-height:10.5px;color:#444;font-weight:400;">1914</div>
<div class="t" style="left:624.00px;top:572.19px;font-size:10.5px;line-height:10.5px;color:#444;font-weight:400;">physics</div>
<div class="t" style="left:731.00px;top:572.19px;font-size:10.5px;line-height:10.5px;color:#444;font-weight:400;">1</div>
<div class="t" style="left:-178.50px;width:400px;text-align:center;top:592.48px;font-size:11px;line-height:11px;color:#444;font-weight:400;">20</div>
<div class="t" style="left:39.40px;top:592.50px;font-size:10.5px;line-height:10.5px;color:#444;font-weight:400;">Sir William Henry</div>
<div class="t" style="left:537.00px;top:592.50px;font-size:10.5px;line-height:10.5px;color:#444;font-weight:400;">1915</div>
<div class="t" style="left:624.00px;top:592.50px;font-size:10.5px;line-height:10.5px;color:#444;font-weight:400;">physics</div>
<div class="t" style="left:731.00px;top:592.50px;font-size:10.5px;line-height:10.5px;color:#444;font-weight:400;">2</div>
<div class="t" style="left:-178.50px;width:400px;text-align:center;top:612.79px;font-size:11px;line-height:11px;color:#444;font-weight:400;">21</div>
<div class="t" style="left:39.40px;top:612.81px;font-size:10.5px;line-height:10.5px;color:#444;font-weight:400;">William Lawrence</div>
<div class="t" style="left:537.00px;top:612.81px;font-size:10.5px;line-height:10.5px;color:#444;font-weight:400;">1915</div>
<div class="t" style="left:624.00px;top:612.81px;font-size:10.5px;line-height:10.5px;color:#444;font-weight:400;">physics</div>
<div class="t" style="left:731.00px;top:612.81px;font-size:10.5px;line-height:10.5px;color:#444;font-weight:400;">2</div>
<div class="t" style="left:-178.50px;width:400px;text-align:center;top:633.10px;font-size:11px;line-height:11px;color:#444;font-weight:400;">22</div>
<div class="t" style="left:39.40px;top:633.12px;font-size:10.5px;line-height:10.5px;color:#444;font-weight:400;">Charles Glover</div>
<div class="t" style="left:537.00px;top:633.12px;font-size:10.5px;line-height:10.5px;color:#444;font-weight:400;">1917</div>
<div class="t" style="left:624.00px;top:633.12px;font-size:10.5px;line-height:10.5px;color:#444;font-weight:400;">physics</div>
<div class="t" style="left:731.00px;top:633.12px;font-size:10.5px;line-height:10.5px;color:#444;font-weight:400;">1</div>
<div class="t" style="left:-178.50px;width:400px;text-align:center;top:653.41px;font-size:11px;line-height:11px;color:#444;font-weight:400;">23</div>
<div class="t" style="left:39.40px;top:653.43px;font-size:10.5px;line-height:10.5px;color:#444;font-weight:400;">Max Karl Ernst Ludwig</div>
<div class="t" style="left:537.00px;top:653.43px;font-size:10.5px;line-height:10.5px;color:#444;font-weight:400;">1918</div>
<div class="t" style="left:624.00px;top:653.43px;font-size:10.5px;line-height:10.5px;color:#444;font-weight:400;">physics</div>
<div class="t" style="left:731.00px;top:653.43px;font-size:10.5px;line-height:10.5px;color:#444;font-weight:400;">1</div>
<div class="t" style="left:-178.50px;width:400px;text-align:center;top:673.72px;font-size:11px;line-height:11px;color:#444;font-weight:400;">24</div>
<div class="t" style="left:39.40px;top:673.74px;font-size:10.5px;line-height:10.5px;color:#444;font-weight:400;">Johannes</div>
<div class="t" style="left:537.00px;top:673.74px;font-size:10.5px;line-height:10.5px;color:#444;font-weight:400;">1919</div>
<div class="t" style="left:624.00px;top:673.74px;font-size:10.5px;line-height:10.5px;color:#444;font-weight:400;">physics</div>
<div class="t" style="left:731.00px;top:673.74px;font-size:10.5px;line-height:10.5px;color:#444;font-weight:400;">1</div>
<div class="t" style="left:-178.50px;width:400px;text-align:center;top:694.03px;font-size:11px;line-height:11px;color:#444;font-weight:400;">25</div>
<div class="t" style="left:39.40px;top:694.05px;font-size:10.5px;line-height:10.5px;color:#444;font-weight:400;">Charles Edouard</div>
<div class="t" style="left:537.00px;top:694.05px;font-size:10.5px;line-height:10.5px;color:#444;font-weight:400;">1920</div>
<div class="t" style="left:624.00px;top:694.05px;font-size:10.5px;line-height:10.5px;color:#444;font-weight:400;">physics</div>
<div class="t" style="left:731.00px;top:694.05px;font-size:10.5px;line-height:10.5px;color:#444;font-weight:400;">1</div>
<div class="t" style="left:-178.50px;width:400px;text-align:center;top:714.34px;font-size:11px;line-height:11px;color:#444;font-weight:400;">26</div>
<div class="t" style="left:39.40px;top:714.36px;font-size:10.5px;line-height:10.5px;color:#444;font-weight:400;">Albert</div>
<div class="t" style="left:537.00px;top:714.36px;font-size:10.5px;line-height:10.5px;color:#444;font-weight:400;">1921</div>
<div class="t" style="left:624.00px;top:714.36px;font-size:10.5px;line-height:10.5px;color:#444;font-weight:400;">physics</div>
<div class="t" style="left:731.00px;top:714.36px;font-size:10.5px;line-height:10.5px;color:#444;font-weight:400;">1</div>
<svg class="r" style="left:0px;top:0px;" width="1024" height="759" viewBox="0 0 1024 759"><path d="M7 200.70 H37" stroke="#e4e4e4" stroke-width="1.8"/><path d="M37 200.70 H239.5" stroke="#cde2d5" stroke-width="1.8"/><path d="M239.5 200.70 H805" stroke="#e8e8e8" stroke-width="1.6"/><path d="M7 221.01 H37" stroke="#e4e4e4" stroke-width="1.8"/><path d="M37 221.01 H239.5" stroke="#cde2d5" stroke-width="1.8"/><path d="M239.5 221.01 H805" stroke="#e8e8e8" stroke-width="1.6"/><path d="M7 241.32 H37" stroke="#e4e4e4" stroke-width="1.8"/><path d="M37 241.32 H239.5" stroke="#cde2d5" stroke-width="1.8"/><path d="M239.5 241.32 H805" stroke="#e8e8e8" stroke-width="1.6"/><path d="M7 261.63 H37" stroke="#e4e4e4" stroke-width="1.8"/><path d="M37 261.63 H239.5" stroke="#cde2d5" stroke-width="1.8"/><path d="M239.5 261.63 H805" stroke="#e8e8e8" stroke-width="1.6"/><path d="M7 281.94 H37" stroke="#e4e4e4" stroke-width="1.8"/><path d="M37 281.94 H239.5" stroke="#cde2d5" stroke-width="1.8"/><path d="M239.5 281.94 H805" stroke="#e8e8e8" stroke-width="1.6"/><path d="M7 302.25 H37" stroke="#e4e4e4" stroke-width="1.8"/><path d="M37 302.25 H239.5" stroke="#cde2d5" stroke-width="1.8"/><path d="M239.5 302.25 H805" stroke="#e8e8e8" stroke-width="1.6"/><path d="M7 322.56 H37" stroke="#e4e4e4" stroke-width="1.8"/><path d="M37 322.56 H239.5" stroke="#cde2d5" stroke-width="1.8"/><path d="M239.5 322.56 H805" stroke="#e8e8e8" stroke-width="1.6"/><path d="M7 342.87 H37" stroke="#e4e4e4" stroke-width="1.8"/><path d="M37 342.87 H239.5" stroke="#cde2d5" stroke-width="1.8"/><path d="M239.5 342.87 H805" stroke="#e8e8e8" stroke-width="1.6"/><path d="M7 363.18 H37" stroke="#e4e4e4" stroke-width="1.8"/><path d="M37 363.18 H239.5" stroke="#cde2d5" stroke-width="1.8"/><path d="M239.5 363.18 H805" stroke="#e8e8e8" stroke-width="1.6"/><path d="M7 383.49 H37" stroke="#e4e4e4" stroke-width="1.8"/><path d="M37 383.49 H239.5" stroke="#cde2d5" stroke-width="1.8"/><path d="M239.5 383.49 H805" stroke="#e8e8e8" stroke-width="1.6"/><path d="M7 403.80 H37" stroke="#e4e4e4" stroke-width="1.8"/><path d="M37 403.80 H239.5" stroke="#cde2d5" stroke-width="1.8"/><path d="M239.5 403.80 H805" stroke="#e8e8e8" stroke-width="1.6"/><path d="M7 424.11 H37" stroke="#e4e4e4" stroke-width="1.8"/><path d="M37 424.11 H239.5" stroke="#cde2d5" stroke-width="1.8"/><path d="M239.5 424.11 H805" stroke="#e8e8e8" stroke-width="1.6"/><path d="M7 444.42 H37" stroke="#e4e4e4" stroke-width="1.8"/><path d="M37 444.42 H239.5" stroke="#cde2d5" stroke-width="1.8"/><path d="M239.5 444.42 H805" stroke="#e8e8e8" stroke-width="1.6"/><path d="M7 464.73 H37" stroke="#e4e4e4" stroke-width="1.8"/><path d="M37 464.73 H239.5" stroke="#cde2d5" stroke-width="1.8"/><path d="M239.5 464.73 H805" stroke="#e8e8e8" stroke-width="1.6"/><path d="M7 485.04 H37" stroke="#e4e4e4" stroke-width="1.8"/><path d="M37 485.04 H239.5" stroke="#cde2d5" stroke-width="1.8"/><path d="M239.5 485.04 H805" stroke="#e8e8e8" stroke-width="1.6"/><path d="M7 505.35 H37" stroke="#e4e4e4" stroke-width="1.8"/><path d="M37 505.35 H239.5" stroke="#cde2d5" stroke-width="1.8"/><path d="M239.5 505.35 H805" stroke="#e8e8e8" stroke-width="1.6"/><path d="M7 525.66 H37" stroke="#e4e4e4" stroke-width="1.8"/><path d="M37 525.66 H239.5" stroke="#cde2d5" stroke-width="1.8"/><path d="M239.5 525.66 H805" stroke="#e8e8e8" stroke-width="1.6"/><path d="M7 545.97 H37" stroke="#e4e4e4" stroke-width="1.8"/><path d="M37 545.97 H239.5" stroke="#cde2d5" stroke-width="1.8"/><path d="M239.5 545.97 H805" stroke="#e8e8e8" stroke-width="1.6"/><path d="M7 566.28 H37" stroke="#e4e4e4" stroke-width="1.8"/><path d="M37 566.28 H239.5" stroke="#cde2d5" stroke-width="1.8"/><path d="M239.5 566.28 H805" stroke="#e8e8e8" stroke-width="1.6"/><path d="M7 586.59 H37" stroke="#e4e4e4" stroke-width="1.8"/><path d="M37 586.59 H239.5" stroke="#cde2d5" stroke-width="1.8"/><path d="M239.5 586.59 H805" stroke="#e8e8e8" stroke-width="1.6"/><path d="M7 606.90 H37" stroke="#e4e4e4" stroke-width="1.8"/><path d="M37 606.90 H239.5" stroke="#cde2d5" stroke-width="1.8"/><path d="M239.5 606.90 H805" stroke="#e8e8e8" stroke-width="1.6"/><path d="M7 627.21 H37" stroke="#e4e4e4" stroke-width="1.8"/><path d="M37 627.21 H239.5" stroke="#cde2d5" stroke-width="1.8"/><path d="M239.5 627.21 H805" stroke="#e8e8e8" stroke-width="1.6"/><path d="M7 647.52 H37" stroke="#e4e4e4" stroke-width="1.8"/><path d="M37 647.52 H239.5" stroke="#cde2d5" stroke-width="1.8"/><path d="M239.5 647.52 H805" stroke="#e8e8e8" stroke-width="1.6"/><path d="M7 667.83 H37" stroke="#e4e4e4" stroke-width="1.8"/><path d="M37 667.83 H239.5" stroke="#cde2d5" stroke-width="1.8"/><path d="M239.5 667.83 H805" stroke="#e8e8e8" stroke-width="1.6"/><path d="M7 688.14 H37" stroke="#e4e4e4" stroke-width="1.8"/><path d="M37 688.14 H239.5" stroke="#cde2d5" stroke-width="1.8"/><path d="M239.5 688.14 H805" stroke="#e8e8e8" stroke-width="1.6"/><path d="M7 708.45 H37" stroke="#e4e4e4" stroke-width="1.8"/><path d="M37 708.45 H239.5" stroke="#cde2d5" stroke-width="1.8"/><path d="M239.5 708.45 H805" stroke="#e8e8e8" stroke-width="1.6"/><path d="M7 728.76 H37" stroke="#e4e4e4" stroke-width="1.8"/><path d="M37 728.76 H239.5" stroke="#cde2d5" stroke-width="1.8"/><path d="M239.5 728.76 H805" stroke="#e8e8e8" stroke-width="1.6"/><path d="M239.50 200.7 V731" stroke="#e6e6e6" stroke-width="1.2"/><path d="M379.70 200.7 V731" stroke="#e6e6e6" stroke-width="1.2"/><path d="M466.50 200.7 V731" stroke="#e6e6e6" stroke-width="1.2"/><path d="M534.00 200.7 V731" stroke="#e6e6e6" stroke-width="1.2"/><path d="M621.00 200.7 V731" stroke="#e6e6e6" stroke-width="1.2"/><path d="M727.80 200.7 V731" stroke="#e6e6e6" stroke-width="1.2"/><path d="M805.00 200.7 V731" stroke="#e6e6e6" stroke-width="1.2"/></svg>
<div class="r" style="left:815.10px;top:201.30px;width:16.50px;height:529.70px;background:#f0f0f0;"></div>
<div class="r" style="left:816.40px;top:234.50px;width:13.50px;height:241.00px;background:#c8c8c8;"></div>
<svg class="r" style="left:817.7px;top:218px;" width="11.2" height="8.6" viewBox="0 0 11.2 8.6"><path d="M1 7.4 L5.6 2.4 L10.2 7.4" stroke="#555" stroke-width="2.3" fill="none"/></svg>
<svg class="r" style="left:817.7px;top:706px;" width="11.2" height="8.6" viewBox="0 0 11.2 8.6"><path d="M1 1.4 L5.6 6.4 L10.2 1.4" stroke="#555" stroke-width="2.3" fill="none"/></svg>
<div class="r" style="left:832.00px;top:150.20px;width:1.20px;height:580.80px;background:#d8d8d8;"></div>
<div class="t" style="left:847.50px;top:162.83px;font-size:17.8px;line-height:17.8px;color:#5aa283;font-weight:400;">Query Settings</div>
<svg class="r" style="left:986.4px;top:169.4px;" width="9.5" height="8.7" viewBox="0 0 9.5 8.7"><path d="M0.8 0.8 L8.7 7.9 M8.7 0.8 L0.8 7.9" stroke="#555" stroke-width="1.6"/></svg>
<svg class="r" style="left:839px;top:200.7px;" width="6" height="6.3" viewBox="0 0 6 6.3"><path d="M6 0 L6 6.3 L0 6.3 Z" fill="#777"/></svg>
<div class="t" style="left:852.30px;top:198.76px;font-size:10.8px;line-height:10.8px;color:#217346;font-weight:700;">PROPERTIES</div>
<div class="t" style="left:852.30px;top:217.82px;font-size:11.2px;line-height:11.2px;color:#444;font-weight:400;">Name</div>
<div class="r" style="left:852.00px;top:232.30px;width:145.50px;height:21.40px;background:#fff;border:1px solid #c6c6c6;"></div>
<div class="t" style="left:857.40px;top:238.52px;font-size:11.2px;line-height:11.2px;color:#444;font-weight:400;">Query1</div>
<div class="t" style="left:852.30px;top:262.63px;font-size:11.3px;line-height:11.3px;color:#3a6eb5;font-weight:400;">All Properties</div>
<svg class="r" style="left:839px;top:291.7px;" width="6" height="6.3" viewBox="0 0 6 6.3"><path d="M6 0 L6 6.3 L0 6.3 Z" fill="#777"/></svg>
<div class="t" style="left:851.90px;top:290.66px;font-size:10.8px;line-height:10.8px;color:#217346;font-weight:700;">APPLIED STEPS</div>
<div class="r" style="left:852.40px;top:309.50px;width:145.10px;height:401.50px;background:#fff;border:1px solid #cfcfcf;"></div>
<div class="r" style="left:853.40px;top:445.50px;width:143.10px;height:18.50px;background:#d5eddf;"></div>
<div class="t" style="left:872.20px;top:315.15px;font-size:11.4px;line-height:11.4px;color:#2f6b4a;font-weight:400;">Source</div>
<svg class="r" style="left:978.5px;top:312.9px;" width="12" height="12" viewBox="0 0 12 12"><g transform="translate(6,6)"><circle cx="0" cy="0" r="3" fill="none" stroke="#a8a8a8" stroke-width="2.3"/><rect x="-1" y="-5.5" width="2" height="3" fill="#a8a8a8" transform="rotate(30)"/><rect x="-1" y="-5.5" width="2" height="3" fill="#a8a8a8" transform="rotate(90)"/><rect x="-1" y="-5.5" width="2" height="3" fill="#a8a8a8" transform="rotate(150)"/><rect x="-1" y="-5.5" width="2" height="3" fill="#a8a8a8" transform="rotate(210)"/><rect x="-1" y="-5.5" width="2" height="3" fill="#a8a8a8" transform="rotate(270)"/><rect x="-1" y="-5.5" width="2" height="3" fill="#a8a8a8" transform="rotate(330)"/></g></svg>
<div class="t" style="left:872.20px;top:334.35px;font-size:11.4px;line-height:11.4px;color:#2f6b4a;font-weight:400;">Converted to Table</div>
<div class="t" style="left:872.20px;top:353.55px;font-size:11.4px;line-height:11.4px;color:#2f6b4a;font-weight:400;">Expand Value</div>
<div class="t" style="left:872.20px;top:372.75px;font-size:11.4px;line-height:11.4px;color:#2f6b4a;font-weight:400;">Expand Value1</div>
<svg class="r" style="left:978.5px;top:370.5px;" width="12" height="12" viewBox="0 0 12 12"><g transform="translate(6,6)"><circle cx="0" cy="0" r="3" fill="none" stroke="#a8a8a8" stroke-width="2.3"/><rect x="-1" y="-5.5" width="2" height="3" fill="#a8a8a8" transform="rotate(30)"/><rect x="-1" y="-5.5" width="2" height="3" fill="#a8a8a8" transform="rotate(90)"/><rect x="-1" y="-5.5" width="2" height="3" fill="#a8a8a8" transform="rotate(150)"/><rect x="-1" y="-5.5" width="2" height="3" fill="#a8a8a8" transform="rotate(210)"/><rect x="-1" y="-5.5" width="2" height="3" fill="#a8a8a8" transform="rotate(270)"/><rect x="-1" y="-5.5" width="2" height="3" fill="#a8a8a8" transform="rotate(330)"/></g></svg>
<div class="t" style="left:872.20px;top:391.95px;font-size:11.4px;line-height:11.4px;color:#2f6b4a;font-weight:400;">Expand prizes</div>
<div class="t" style="left:872.20px;top:411.15px;font-size:11.4px;line-height:11.4px;color:#2f6b4a;font-weight:400;">Expand prizes1</div>
<svg class="r" style="left:978.5px;top:408.9px;" width="12" height="12" viewBox="0 0 12 12"><g transform="translate(6,6)"><circle cx="0" cy="0" r="3" fill="none" stroke="#a8a8a8" stroke-width="2.3"/><rect x="-1" y="-5.5" width="2" height="3" fill="#a8a8a8" transform="rotate(30)"/><rect x="-1" y="-5.5" width="2" height="3" fill="#a8a8a8" transform="rotate(90)"/><rect x="-1" y="-5.5" width="2" height="3" fill="#a8a8a8" transform="rotate(150)"/><rect x="-1" y="-5.5" width="2" height="3" fill="#a8a8a8" transform="rotate(210)"/><rect x="-1" y="-5.5" width="2" height="3" fill="#a8a8a8" transform="rotate(270)"/><rect x="-1" y="-5.5" width="2" height="3" fill="#a8a8a8" transform="rotate(330)"/></g></svg>
<div class="t" style="left:872.20px;top:430.35px;font-size:11.4px;line-height:11.4px;color:#2f6b4a;font-weight:400;">Removed Other ...</div>
<svg class="r" style="left:978.5px;top:428.1px;" width="12" height="12" viewBox="0 0 12 12"><g transform="translate(6,6)"><circle cx="0" cy="0" r="3" fill="none" stroke="#a8a8a8" stroke-width="2.3"/><rect x="-1" y="-5.5" width="2" height="3" fill="#a8a8a8" transform="rotate(30)"/><rect x="-1" y="-5.5" width="2" height="3" fill="#a8a8a8" transform="rotate(90)"/><rect x="-1" y="-5.5" width="2" height="3" fill="#a8a8a8" transform="rotate(150)"/><rect x="-1" y="-5.5" width="2" height="3" fill="#a8a8a8" transform="rotate(210)"/><rect x="-1" y="-5.5" width="2" height="3" fill="#a8a8a8" transform="rotate(270)"/><rect x="-1" y="-5.5" width="2" height="3" fill="#a8a8a8" transform="rotate(330)"/></g></svg>
<div class="t" style="left:872.20px;top:449.55px;font-size:11.4px;line-height:11.4px;color:#2f6b4a;font-weight:400;">Renamed Columns</div>
<svg class="r" style="left:857px;top:450px;" width="9.5" height="9" viewBox="0 0 9.5 9"><path d="M0.8 0.8 L8.7 8.2 M8.7 0.8 L0.8 8.2" stroke="#555" stroke-width="1.3"/></svg>
<div class="r" style="left:7.00px;top:731.10px;width:1010.50px;height:20.60px;background:#217346;"></div>
<div class="t" style="left:11.50px;top:737.43px;font-size:10px;line-height:10px;color:#ffffff;font-weight:400;">READY</div>
<div class="t" style="right:11.80px;top:737.43px;font-size:10px;line-height:10px;color:#ffffff;font-weight:400;">PREVIEW DOWNLOADED AT 9:08 AM.</div>
<div class="r" style="left:221.50px;top:198.40px;width:318.00px;height:548.40px;background:#ffffff;border:1px solid #c6c6c6;box-shadow:1px 1px 2px rgba(0,0,0,0.15);"></div>
<svg class="r" style="left:229.5px;top:208.2px;" width="13" height="15" viewBox="0 0 13 15"><text x="0" y="6.3" font-family="Liberation Sans" font-size="8.3" font-weight="700" fill="#555">A</text><text x="0.2" y="13.5" font-family="Liberation Sans" font-size="8.3" font-weight="700" fill="#555">Z</text><path d="M9.8 0.5 V12.3" stroke="#555" stroke-width="1.1"/><path d="M7.7 10.8 H11.9 L9.8 13.6 Z" fill="#555"/></svg>
<svg class="r" style="left:229.5px;top:231.4px;" width="13" height="15" viewBox="0 0 13 15"><text x="0" y="6.3" font-family="Liberation Sans" font-size="8.3" font-weight="700" fill="#555">Z</text><text x="0.2" y="13.5" font-family="Liberation Sans" font-size="8.3" font-weight="700" fill="#555">A</text><path d="M9.8 0.5 V12.3" stroke="#555" stroke-width="1.1"/><path d="M7.7 10.8 H11.9 L9.8 13.6 Z" fill="#555"/></svg>
<div class="t" style="left:251.90px;top:209.67px;font-size:11.5px;line-height:11.5px;color:#444;font-weight:400;">Sort Ascending</div>
<div class="t" style="left:251.90px;top:232.27px;font-size:11.5px;line-height:11.5px;color:#444;font-weight:400;">Sort Descending</div>
<div class="t" style="left:251.90px;top:254.87px;font-size:11.5px;line-height:11.5px;color:#b8b8b8;font-weight:400;">Clear Sort</div>
<div class="r" style="left:252.00px;top:275.00px;width:276.50px;height:1.00px;background:#e3e3e3;"></div>
<svg class="r" style="left:226px;top:280px;" width="17" height="17" viewBox="0 0 17 17"><path d="M1 1.2 H12.6 L7.6 6.8 V11 L5.8 10.2 V6.8 Z" fill="#6e6e6e"/><path d="M2.5 2 L6.5 6.6 V10" stroke="#bcbcbc" stroke-width="0.9" fill="none"/><path d="M8.2 9.4 L14.6 15 M14.6 9.4 L8.2 15" stroke="#d9472b" stroke-width="1.9" stroke-linecap="round"/></svg>
<div class="t" style="left:251.90px;top:283.27px;font-size:11.5px;line-height:11.5px;color:#b8b8b8;font-weight:400;">Clear Filter</div>
<div class="t" style="left:251.90px;top:310.27px;font-size:11.5px;line-height:11.5px;color:#444;font-weight:400;">Text Filters</div>
<svg class="r" style="left:525px;top:312px;" width="4" height="6" viewBox="0 0 4 6"><path d="M0 0 L3.5 3 L0 6 Z" fill="#666"/></svg>
<div class="r" style="left:252.00px;top:329.50px;width:276.50px;height:1.00px;background:#e3e3e3;"></div>
<div class="r" style="left:251.90px;top:338.10px;width:276.70px;height:20.70px;background:#fff;border:1.3px solid #3f8a5f;"></div>
<div class="r" style="left:256.80px;top:341.80px;width:1.00px;height:14.00px;background:#222;"></div>
<div class="t" style="left:258.00px;top:343.27px;font-size:11.5px;line-height:11.5px;color:#aaaaaa;font-weight:400;">Search</div>
<div class="r" style="left:252.40px;top:365.20px;width:276.20px;height:339.30px;background:#fff;border:1px solid #dadada;"></div>
<div class="r" style="left:511.40px;top:366.20px;width:16.20px;height:322.00px;background:#f0f0f0;"></div>
<div class="r" style="left:513.00px;top:399.20px;width:13.80px;height:13.50px;background:#c8c8c8;"></div>
<svg class="r" style="left:514.2px;top:382.6px;" width="11" height="8" viewBox="0 0 11 8"><path d="M1 6.3 L5.5 1.8 L10 6.3" stroke="#555" stroke-width="2.3" fill="none"/></svg>
<svg class="r" style="left:514.2px;top:662.6px;" width="11" height="8" viewBox="0 0 11 8"><path d="M1 1.5 L5.5 6 L10 1.5" stroke="#555" stroke-width="2.3" fill="none"/></svg>
<div class="r" style="left:253.40px;top:688.10px;width:274.20px;height:15.50px;background:#f0f0f0;"></div>
<div class="r" style="left:285.00px;top:688.10px;width:104.50px;height:14.60px;background:#c8c8c8;"></div>
<svg class="r" style="left:269px;top:690.8px;" width="8" height="11" viewBox="0 0 8 11"><path d="M6.2 1 L1.8 5.5 L6.2 10" stroke="#555" stroke-width="2.3" fill="none"/></svg>
<svg class="r" style="left:487px;top:690.8px;" width="8" height="11" viewBox="0 0 8 11"><path d="M1.3 1 L5.7 5.5 L1.3 10" stroke="#555" stroke-width="2.3" fill="none"/></svg>
<div class="r" style="left:253.4px;top:366.2px;width:258px;height:321.9px;overflow:hidden">
<div class="r" style="left:8.80px;top:2.90px;width:11.8px;height:11.8px;background:#fff;border:1px solid #a9a9a9"></div>
<svg class="r" style="left:10.80px;top:5.40px" width="8" height="7" viewBox="0 0 8 7"><path d="M0.8 3.6 L3 6 L7.4 0.9" stroke="#333" stroke-width="1.75" fill="none"/></svg>
<div class="t" style="left:26.60px;top:4.62px;font-size:11.2px;line-height:11.2px;color:#444">(Select All)</div>
<div class="r" style="left:8.80px;top:22.30px;width:11.8px;height:11.8px;background:#d3ecdc;border:1px solid #a9a9a9"></div>
<svg class="r" style="left:10.80px;top:24.80px" width="8" height="7" viewBox="0 0 8 7"><path d="M0.8 3.6 L3 6 L7.4 0.9" stroke="#333" stroke-width="1.75" fill="none"/></svg>
<div class="t" style="left:26.60px;top:24.02px;font-size:11.2px;line-height:11.2px;color:#444">(null)</div>
<div class="r" style="left:8.80px;top:41.70px;width:11.8px;height:11.8px;background:#fff;border:1px solid #a9a9a9"></div>
<svg class="r" style="left:10.80px;top:44.20px" width="8" height="7" viewBox="0 0 8 7"><path d="M0.8 3.6 L3 6 L7.4 0.9" stroke="#333" stroke-width="1.75" fill="none"/></svg>
<div class="t" style="left:26.60px;top:43.42px;font-size:11.2px;line-height:11.2px;color:#444">A. Michael</div>
<div class="r" style="left:8.80px;top:61.10px;width:11.8px;height:11.8px;background:#fff;border:1px solid #a9a9a9"></div>
<svg class="r" style="left:10.80px;top:63.60px" width="8" height="7" viewBox="0 0 8 7"><path d="M0.8 3.6 L3 6 L7.4 0.9" stroke="#333" stroke-width="1.75" fill="none"/></svg>
<div class="t" style="left:26.60px;top:62.82px;font-size:11.2px;line-height:11.2px;color:#444">Aage Niels</div>
<div class="r" style="left:8.80px;top:80.50px;width:11.8px;height:11.8px;background:#fff;border:1px solid #a9a9a9"></div>
<svg class="r" style="left:10.80px;top:83.00px" width="8" height="7" viewBox="0 0 8 7"><path d="M0.8 3.6 L3 6 L7.4 0.9" stroke="#333" stroke-width="1.75" fill="none"/></svg>
<div class="t" style="left:26.60px;top:82.22px;font-size:11.2px;line-height:11.2px;color:#444">Aaron</div>
<div class="r" style="left:8.80px;top:99.90px;width:11.8px;height:11.8px;background:#fff;border:1px solid #a9a9a9"></div>
<svg class="r" style="left:10.80px;top:102.40px" width="8" height="7" viewBox="0 0 8 7"><path d="M0.8 3.6 L3 6 L7.4 0.9" stroke="#333" stroke-width="1.75" fill="none"/></svg>
<div class="t" style="left:26.60px;top:101.62px;font-size:11.2px;line-height:11.2px;color:#444">Abdus</div>
<div class="r" style="left:8.80px;top:119.30px;width:11.8px;height:11.8px;background:#fff;border:1px solid #a9a9a9"></div>
<svg class="r" style="left:10.80px;top:121.80px" width="8" height="7" viewBox="0 0 8 7"><path d="M0.8 3.6 L3 6 L7.4 0.9" stroke="#333" stroke-width="1.75" fill="none"/></svg>
<div class="t" style="left:26.60px;top:121.02px;font-size:11.2px;line-height:11.2px;color:#444">Ada E.</div>
<div class="r" style="left:8.80px;top:138.70px;width:11.8px;height:11.8px;background:#fff;border:1px solid #a9a9a9"></div>
<svg class="r" style="left:10.80px;top:141.20px" width="8" height="7" viewBox="0 0 8 7"><path d="M0.8 3.6 L3 6 L7.4 0.9" stroke="#333" stroke-width="1.75" fill="none"/></svg>
<div class="t" style="left:26.60px;top:140.42px;font-size:11.2px;line-height:11.2px;color:#444">Adam G.</div>
<div class="r" style="left:8.80px;top:158.10px;width:11.8px;height:11.8px;background:#fff;border:1px solid #a9a9a9"></div>
<svg class="r" style="left:10.80px;top:160.60px" width="8" height="7" viewBox="0 0 8 7"><path d="M0.8 3.6 L3 6 L7.4 0.9" stroke="#333" stroke-width="1.75" fill="none"/></svg>
<div class="t" style="left:26.60px;top:159.82px;font-size:11.2px;line-height:11.2px;color:#444">Adolf Friedrich Johann</div>
<div class="r" style="left:8.80px;top:177.50px;width:11.8px;height:11.8px;background:#fff;border:1px solid #a9a9a9"></div>
<svg class="r" style="left:10.80px;top:180.00px" width="8" height="7" viewBox="0 0 8 7"><path d="M0.8 3.6 L3 6 L7.4 0.9" stroke="#333" stroke-width="1.75" fill="none"/></svg>
<div class="t" style="left:26.60px;top:179.22px;font-size:11.2px;line-height:11.2px;color:#444">Adolf Otto Reinhold</div>
<div class="r" style="left:8.80px;top:196.90px;width:11.8px;height:11.8px;background:#fff;border:1px solid #a9a9a9"></div>
<svg class="r" style="left:10.80px;top:199.40px" width="8" height="7" viewBox="0 0 8 7"><path d="M0.8 3.6 L3 6 L7.4 0.9" stroke="#333" stroke-width="1.75" fill="none"/></svg>
<div class="t" style="left:26.60px;top:198.62px;font-size:11.2px;line-height:11.2px;color:#444">Adolfo</div>
<div class="r" style="left:8.80px;top:216.30px;width:11.8px;height:11.8px;background:#fff;border:1px solid #a9a9a9"></div>
<svg class="r" style="left:10.80px;top:218.80px" width="8" height="7" viewBox="0 0 8 7"><path d="M0.8 3.6 L3 6 L7.4 0.9" stroke="#333" stroke-width="1.75" fill="none"/></svg>
<div class="t" style="left:26.60px;top:218.02px;font-size:11.2px;line-height:11.2px;color:#444">Ahmed H.</div>
<div class="r" style="left:8.80px;top:235.70px;width:11.8px;height:11.8px;background:#fff;border:1px solid #a9a9a9"></div>
<svg class="r" style="left:10.80px;top:238.20px" width="8" height="7" viewBox="0 0 8 7"><path d="M0.8 3.6 L3 6 L7.4 0.9" stroke="#333" stroke-width="1.75" fill="none"/></svg>
<div class="t" style="left:26.60px;top:237.42px;font-size:11.2px;line-height:11.2px;color:#444">Akira</div>
<div class="r" style="left:8.80px;top:255.10px;width:11.8px;height:11.8px;background:#fff;border:1px solid #a9a9a9"></div>
<svg class="r" style="left:10.80px;top:257.60px" width="8" height="7" viewBox="0 0 8 7"><path d="M0.8 3.6 L3 6 L7.4 0.9" stroke="#333" stroke-width="1.75" fill="none"/></svg>
<div class="t" style="left:26.60px;top:256.82px;font-size:11.2px;line-height:11.2px;color:#444">Alan G.</div>
<div class="r" style="left:8.80px;top:274.50px;width:11.8px;height:11.8px;background:#fff;border:1px solid #a9a9a9"></div>
<svg class="r" style="left:10.80px;top:277.00px" width="8" height="7" viewBox="0 0 8 7"><path d="M0.8 3.6 L3 6 L7.4 0.9" stroke="#333" stroke-width="1.75" fill="none"/></svg>
<div class="t" style="left:26.60px;top:276.22px;font-size:11.2px;line-height:11.2px;color:#444">Alan J.</div>
<div class="r" style="left:8.80px;top:293.90px;width:11.8px;height:11.8px;background:#fff;border:1px solid #a9a9a9"></div>
<svg class="r" style="left:10.80px;top:296.40px" width="8" height="7" viewBox="0 0 8 7"><path d="M0.8 3.6 L3 6 L7.4 0.9" stroke="#333" stroke-width="1.75" fill="none"/></svg>
<div class="t" style="left:26.60px;top:295.62px;font-size:11.2px;line-height:11.2px;color:#444">Alan Lloyd</div>
<div class="r" style="left:8.80px;top:313.30px;width:11.8px;height:11.8px;background:#fff;border:1px solid #a9a9a9"></div>
<svg class="r" style="left:10.80px;top:315.80px" width="8" height="7" viewBox="0 0 8 7"><path d="M0.8 3.6 L3 6 L7.4 0.9" stroke="#333" stroke-width="1.75" fill="none"/></svg>
<div class="t" style="left:26.60px;top:315.02px;font-size:11.2px;line-height:11.2px;color:#444">Albert</div>
</div>
<div class="r" style="left:403.70px;top:715.30px;width:57.90px;height:20.50px;background:#fff;border:1.3px solid #3f8a5f;"></div>
<div class="t" style="left:232.60px;width:400px;text-align:center;top:721.31px;font-size:10.5px;line-height:10.5px;color:#444;font-weight:400;">OK</div>
<div class="r" style="left:471.00px;top:715.30px;width:57.30px;height:20.50px;background:#fff;border:1px solid #c6c6c6;"></div>
<div class="t" style="left:299.60px;width:400px;text-align:center;top:721.31px;font-size:10.5px;line-height:10.5px;color:#444;font-weight:400;">Cancel</div>
<div class="r" style="left:255.90px;top:381.00px;width:53.10px;height:27.90px;background:none;border:4.6px solid #e6453e;"></div>
<svg class="r" style="left:0px;top:0px;position:absolute;left:0;top:0;pointer-events:none;" width="1024" height="759" viewBox="0 0 1024 759"><defs><filter id="sh" x="-10%" y="-10%" width="120%" height="130%"><feDropShadow dx="1" dy="2" stdDeviation="1.2" flood-color="#000" flood-opacity="0.25"/></filter></defs><g filter="url(#sh)"><path d="M332 402 L543.5 474" stroke="#e5433d" stroke-width="7.5" stroke-linecap="round"/><path d="M312.7 396.7 L338.5 393 L331 414 Z" fill="#e5433d" stroke="#e5433d" stroke-width="1.5" stroke-linejoin="round"/></g></svg>
</body></html>
